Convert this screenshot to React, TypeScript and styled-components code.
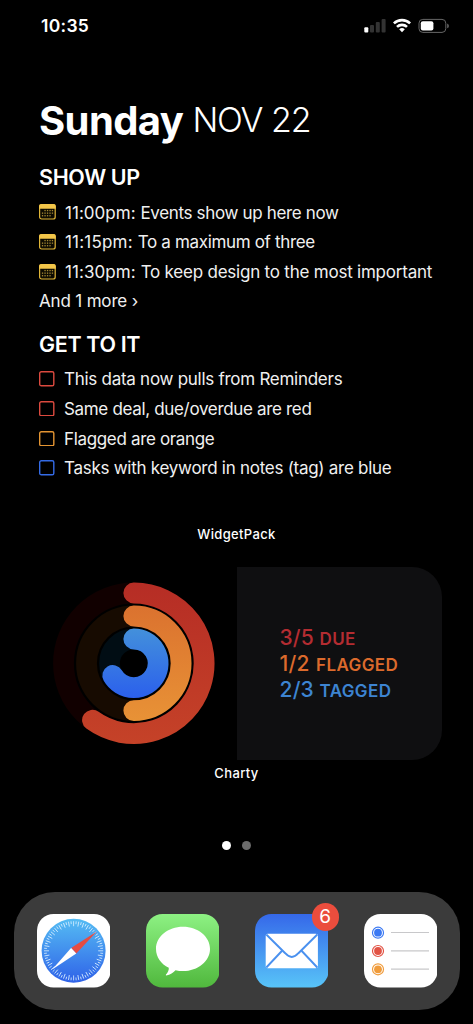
import React from "react";
import styled, { createGlobalStyle } from "styled-components";

const GlobalStyle = createGlobalStyle`
  html, body { margin: 0; background: #000; }
  * { box-sizing: border-box; }
  body { font-family: Inter, "Liberation Sans", sans-serif; color: #fff; }
  svg { display: block; flex: none; }
`;

const Screen = styled.main`
  width: 473px;
  height: 1024px;
  overflow: hidden;
  background: #000;
  display: flex;
  flex-direction: column;
`;

const StatusBar = styled.header`
  height: 95px;
  padding: 13px 23px 0 41px;
  display: flex;
  justify-content: space-between;
  align-items: flex-start;
`;

const Clock = styled.span`
  font-size: 17.5px;
  font-weight: 600;
  line-height: 25px;
  letter-spacing: 0.3px;
`;

const StatusGlyphs = styled.div`
  padding-top: 4px;
`;

const Agenda = styled.section`
  height: 425.5px;
  padding-left: 39px;
  white-space: nowrap;
`;

const Title = styled.h1`
  margin: 0 0 17px;
  height: 50px;
  display: flex;
  align-items: flex-start;
  line-height: 50px;
  font-size: 40px;
  font-weight: 700;
`;

const Weekday = styled.span`
  padding-top: 1px;
  letter-spacing: -0.6px;
  width: 153.5px;
`;

const DateText = styled.span`
  font-size: 34px;
  font-weight: 330;
  letter-spacing: -1.2px;
  word-spacing: 0.5px;
`;

const Heading = styled.h2`
  margin: 0 0 6.5px;
  font-size: 21.5px;
  font-weight: 600;
  line-height: 30px;
  letter-spacing: -0.35px;
`;

const List = styled.ul`
  margin: 0;
  padding: 0;
  list-style: none;
`;

const Item = styled.li<{ $gap: number; $spacing: number }>`
  height: 29.67px;
  display: flex;
  align-items: center;
  gap: ${(p) => p.$gap}px;
  font-size: 17px;
  line-height: 29.67px;
  letter-spacing: ${(p) => p.$spacing}px;
  color: #f0f0f0;

  svg {
    margin-bottom: 2px;
  }
`;

const EventTime = styled.span<{ $spacing: number }>`
  display: inline-block;
  letter-spacing: ${(p) => p.$spacing}px;
  white-space: pre;
`;

const More = styled.div`
  height: 29.67px;
  margin-bottom: 11.6px;
  font-size: 17px;
  line-height: 29.67px;
  letter-spacing: -0.17px;
  color: #f0f0f0;
`;

const WidgetLabel = styled.div<{ $height: number }>`
  height: ${(p) => p.$height}px;
  text-align: center;
  font-size: 13px;
  font-weight: 500;
  line-height: 27px;
  letter-spacing: 0.35px;
`;

const Chart = styled.section`
  height: 193px;
  display: flex;
  padding: 0 31px 0 31px;
`;

const RingHalf = styled.div`
  width: 205.5px;
  padding: 13px 0 0 20px;
`;

const StatPanel = styled.div`
  flex: 1;
  padding: 57.5px 0 0 43px;
  background: #0f0f11;
  border-radius: 0 30px 30px 0;
`;

const Stat = styled.div<{ $color: string }>`
  display: flex;
  align-items: baseline;
  height: 26.4px;
  line-height: 26.4px;
  font-weight: 550;
  white-space: nowrap;
  color: ${(p) => p.$color};
`;

const Count = styled.span<{ $width: number }>`
  width: ${(p) => p.$width}px;
  font-size: 21px;
  letter-spacing: 0.2px;
`;

const StatName = styled.span`
  font-size: 17px;
  font-weight: 600;
  letter-spacing: 0.4px;
`;

const Pager = styled.nav`
  height: 101px;
  padding-top: 50px;
  display: flex;
  justify-content: center;
  gap: 11px;
`;

const Dot = styled.span<{ $active?: boolean }>`
  width: 9px;
  height: 9px;
  border-radius: 50%;
  background: ${(p) => (p.$active ? "#fff" : "#6c6c6c")};
`;

const Dock = styled.footer`
  width: 445.5px;
  height: 118px;
  margin-left: 14px;
  padding: 22px 22.5px 0;
  display: flex;
  justify-content: space-between;
  border-radius: 41px;
  background: #3b3b3b;
`;

const AppIcon = styled.div`
  position: relative;
  width: 73.5px;
  height: 73.5px;
`;

const Badge = styled.span`
  position: absolute;
  top: -11px;
  right: -11px;
  width: 27.5px;
  height: 27.5px;
  border-radius: 50%;
  background: #eb4d3d;
  text-align: center;
  font-size: 19px;
  line-height: 27.5px;
`;

const StatusIcons = () => (
  <svg width="86" height="18" viewBox="364 17 86 18">
    <rect x="364.3" y="27.2" width="4" height="5.4" rx="1" fill="#fff" />
    <rect x="370" y="25" width="4" height="7.6" rx="1" fill="#333" />
    <rect x="375.8" y="22" width="4" height="10.6" rx="1" fill="#333" />
    <rect x="381.6" y="19" width="4" height="13.6" rx="1" fill="#333" />
    <g fill="none" stroke="#fff" strokeWidth="2.6">
      <path d="M393.9 23.4a11.7 11.7 0 0 1 16.2 0" />
      <path d="M397 26.9a7.2 7.2 0 0 1 10 0" />
    </g>
    <path d="M399.2 29.2a4.2 4.2 0 0 1 5.6 0L402 32.3z" fill="#fff" />
    <rect x="419" y="19.4" width="26.8" height="13" rx="3.8" fill="none" stroke="#666" strokeWidth="1" />
    <rect x="420.8" y="21.2" width="12.6" height="9.4" rx="2" fill="#fff" />
    <path d="M447.2 23.6q1.7.6 1.7 2.3t-1.7 2.3z" fill="#666" />
  </svg>
);

const CalendarIcon = () => (
  <svg width="17" height="16" viewBox="0 0 17 16">
    <rect x=".6" y=".6" width="15.6" height="14.4" rx="2" fill="#0d0b02" stroke="#e0b537" strokeWidth="1.2" />
    <path d="M0 4.8V2.4Q0 0 2.4 0h12Q16.8 0 16.8 2.4v2.4z" fill="#f3c649" />
    <g fill="#a88b33">
      {[[6, 8.5, 11, 13.4], [3.5, 6, 8.5, 11, 13.4], [3.5, 6, 8.5, 11]].map((xs, r) =>
        xs.map((x) => <rect key={`${r}-${x}`} x={x - 0.6} y={5.9 + r * 2.6} width="1.3" height="1.3" />)
      )}
    </g>
  </svg>
);

const CheckBox = ({ color }: { color: string }) => (
  <svg width="15.5" height="15.5" viewBox="0 0 15.5 15.5">
    <rect x=".7" y=".7" width="14.1" height="14.1" rx="1.6" fill="none" stroke={color} strokeWidth="1.4" />
  </svg>
);

const arc = (r: number, degrees: number) => {
  const t = (degrees * Math.PI) / 180;
  const large = degrees >= 180 ? 1 : 0;
  return `M82 ${82 - r}A${r} ${r} 0 ${large} 1 ${82 + r * Math.sin(t)} ${82 - r * Math.cos(t)}`;
};

const rings = [
  { id: "due", r: 70.3, turn: 216, from: "#b62d25", to: "#c54228", track: "#110000" },
  { id: "flag", r: 47.3, turn: 180, from: "#db722f", to: "#e89236", track: "#170b01" },
  { id: "tag", r: 24.3, turn: 240, from: "#4390db", to: "#2b60ec", track: "#010d14" },
];

const Rings = () => (
  <svg width="164" height="166" viewBox="-.8 -1.3 164 166">
    <defs>
      {rings.map((k) => (
        <linearGradient key={k.id} id={k.id} gradientUnits="userSpaceOnUse" x1="82" y1={82 - k.r - 10} x2="82" y2={82 + k.r + 10}>
          <stop stopColor={k.from} />
          <stop offset="1" stopColor={k.to} />
        </linearGradient>
      ))}
    </defs>
    {rings.map((k) => (
      <g key={k.id} fill="none" strokeWidth="20.8">
        <circle cx="82" cy="82" r={k.r} stroke={k.track} />
        <path d={arc(k.r, k.turn)} stroke={`url(#${k.id})`} strokeLinecap="round" />
      </g>
    ))}
  </svg>
);

const SafariIcon = () => (
  <svg width="73.5" height="73.5" viewBox="0 0 73.5 73.5">
    <defs>
      <linearGradient id="safari" x1="0" y1="0" x2="0" y2="1">
        <stop stopColor="#55bcf3" />
        <stop offset="1" stopColor="#2f62e8" />
      </linearGradient>
    </defs>
    <rect width="73.5" height="73.5" rx="16.5" fill="#fff" />
    <circle cx="36.6" cy="36.8" r="32" fill="url(#safari)" />
    <g stroke="#d9efff" strokeWidth=".8">
      {Array.from({ length: 72 }, (_, i) => (
        <path key={i} d={`M36.6 7.2v${i % 2 ? 2.8 : 5}`} transform={`rotate(${i * 5} 36.6 36.8)`} />
      ))}
    </g>
    <path d="M59.8 17.4L34.1 34l5.2 5.4z" fill="#e64c43" />
    <path d="M15.2 55.4L34.1 34l5.2 5.4z" fill="#fff" />
  </svg>
);

const MessagesIcon = () => (
  <svg width="73.5" height="73.5" viewBox="0 0 73.5 73.5">
    <defs>
      <linearGradient id="messages" x1="0" y1="0" x2="0" y2="1">
        <stop stopColor="#8df183" />
        <stop offset="1" stopColor="#50b83d" />
      </linearGradient>
    </defs>
    <rect width="73.5" height="73.5" rx="16.5" fill="url(#messages)" />
    <path
      d="M37 12.8C22 12.8 10 22.6 10 35c0 8 5 15 12.8 18.8C23 56.5 21.5 59 20 60.5c-.5 1 .3 1.1 1.2.8 3.5-1 6.5-3 8.3-5.1 2.4.6 5 .9 7.5.9 15 0 27-9.9 27-22.1S52 12.8 37 12.8z"
      fill="#fff"
    />
  </svg>
);

const MailIcon = () => (
  <svg width="73.5" height="73.5" viewBox="0 0 73.5 73.5">
    <defs>
      <linearGradient id="mail" x1="0" y1="0" x2="0" y2="1">
        <stop stopColor="#3568e9" />
        <stop offset="1" stopColor="#58c4f8" />
      </linearGradient>
    </defs>
    <rect width="73.5" height="73.5" rx="16.5" fill="url(#mail)" />
    <rect x="10.7" y="19.8" width="52.2" height="34.4" rx="2" fill="#fff" />
    <g fill="none" stroke="#4a91ef" strokeWidth="1.9">
      <path d="M11.3 20.5L30.2 39.2q6.6 7.6 13.2 0L62.3 20.5" />
      <path d="M11.3 53.5L27.3 36.5M62.3 53.5L46.3 36.5" />
    </g>
  </svg>
);

const RemindersIcon = () => (
  <svg width="73.5" height="73.5" viewBox="0 0 73.5 73.5">
    <rect width="73.5" height="73.5" rx="16.5" fill="#fff" />
    {["#3b79f3", "#e25345", "#f09c3c"].map((c, i) => (
      <g key={c}>
        <circle cx="14" cy={18.7 + i * 18.3} r="5.5" fill="none" stroke={c} strokeWidth="1.2" />
        <circle cx="14" cy={18.7 + i * 18.3} r="3.9" fill={c} />
        <path d={`M27 ${18.5 + i * 18.3}h38`} stroke="#c8c8ca" strokeWidth="1.2" />
      </g>
    ))}
  </svg>
);

const events = [
  { time: "11:00pm: ", timeSpacing: 0.03, text: "Events show up here now", spacing: -0.34 },
  { time: "11:15pm: ", timeSpacing: 0.2, text: "To a maximum of three", spacing: -0.34 },
  { time: "11:30pm: ", timeSpacing: 0.08, text: "To keep design to the most important", spacing: -0.22 },
];

const tasks = [
  { text: "This data now pulls from Reminders", color: "#dc4a3f", spacing: -0.27 },
  { text: "Same deal, due/overdue are red", color: "#dc4a3f", spacing: -0.33 },
  { text: "Flagged are orange", color: "#e39432", spacing: -0.34 },
  { text: "Tasks with keyword in notes (tag) are blue", color: "#346be6", spacing: -0.27 },
];

const stats = [
  { count: "3/5", name: "DUE", color: "#b42c31", width: 40 },
  { count: "1/2", name: "FLAGGED", color: "#dc6a2c", width: 36.5 },
  { count: "2/3", name: "TAGGED", color: "#3d84d1", width: 40 },
];

export default function App() {
  return (
    <Screen>
      <GlobalStyle />
      <StatusBar>
        <Clock>10:35</Clock>
        <StatusGlyphs>
          <StatusIcons />
        </StatusGlyphs>
      </StatusBar>
      <Agenda>
        <Title>
          <Weekday>Sunday</Weekday>
          <DateText>NOV 22</DateText>
        </Title>
        <Heading>SHOW UP</Heading>
        <List>
          {events.map((e) => (
            <Item key={e.time} $gap={9} $spacing={e.spacing}>
              <CalendarIcon />
              <span>
                <EventTime $spacing={e.timeSpacing}>{e.time}</EventTime>
                {e.text}
              </span>
            </Item>
          ))}
        </List>
        <More>And 1 more ›</More>
        <Heading>GET TO IT</Heading>
        <List>
          {tasks.map((t) => (
            <Item key={t.text} $gap={9.5} $spacing={t.spacing}>
              <CheckBox color={t.color} />
              <span>{t.text}</span>
            </Item>
          ))}
        </List>
      </Agenda>
      <WidgetLabel $height={46.5}>WidgetPack</WidgetLabel>
      <Chart>
        <RingHalf>
          <Rings />
        </RingHalf>
        <StatPanel>
          {stats.map((s) => (
            <Stat key={s.name} $color={s.color}>
              <Count $width={s.width}>{s.count}</Count>
              <StatName>{s.name}</StatName>
            </Stat>
          ))}
        </StatPanel>
      </Chart>
      <WidgetLabel $height={31}>Charty</WidgetLabel>
      <Pager>
        <Dot $active />
        <Dot />
      </Pager>
      <Dock>
        <AppIcon><SafariIcon /></AppIcon>
        <AppIcon><MessagesIcon /></AppIcon>
        <AppIcon>
          <MailIcon />
          <Badge>6</Badge>
        </AppIcon>
        <AppIcon><RemindersIcon /></AppIcon>
      </Dock>
    </Screen>
  );
}
